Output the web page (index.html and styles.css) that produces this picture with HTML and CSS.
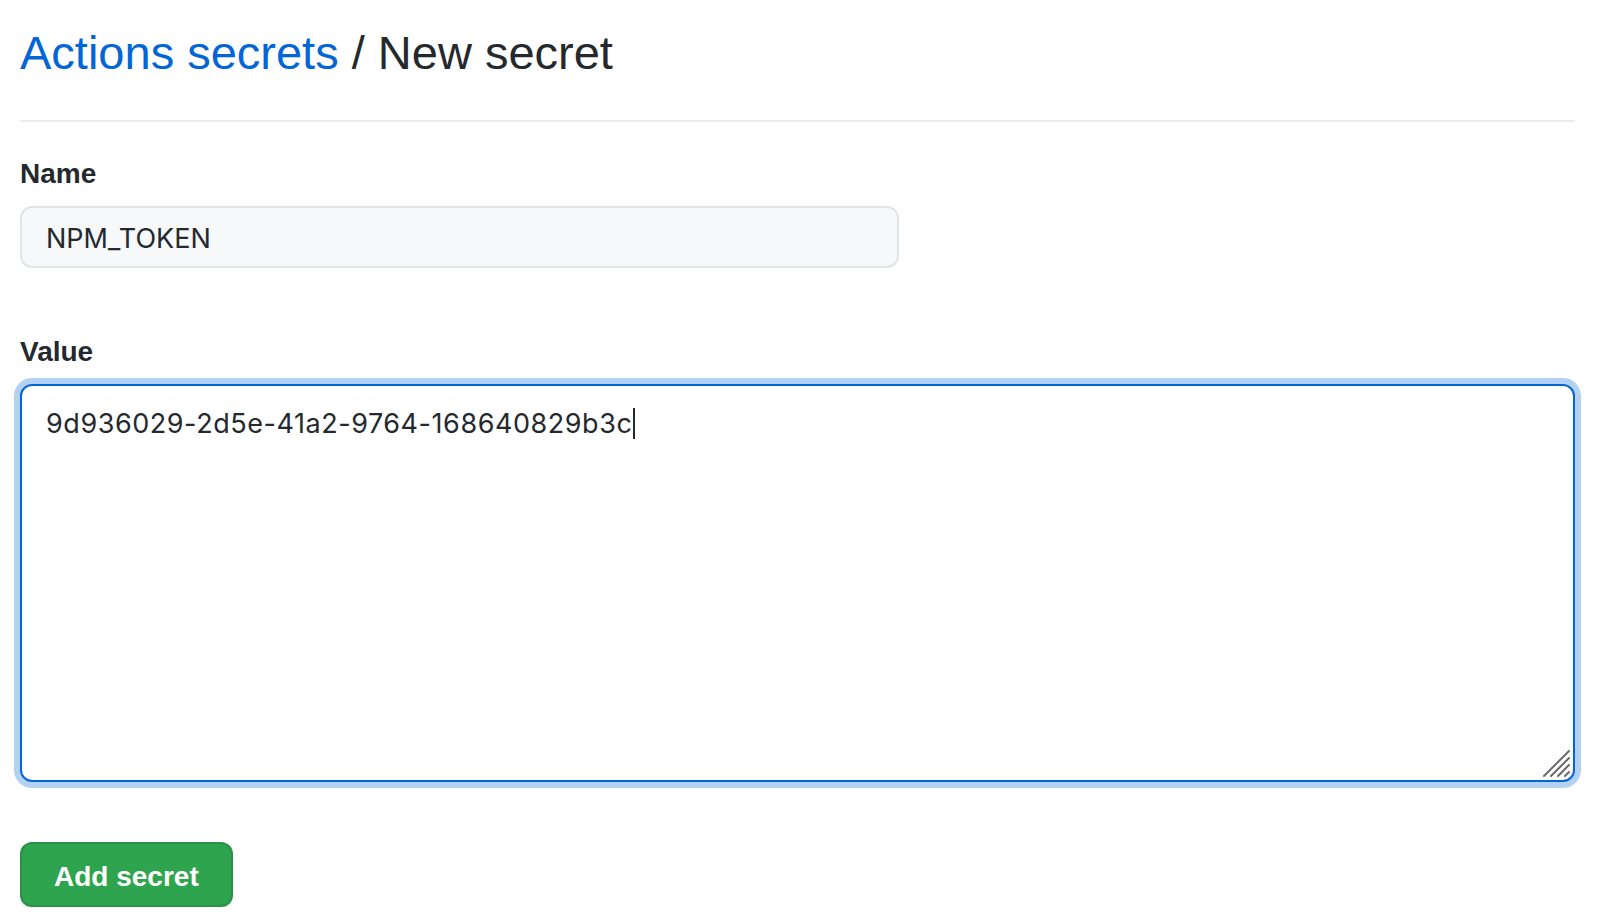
FILE: index.html
```html
<!DOCTYPE html>
<html lang="en">
<head>
<meta charset="utf-8">
<title>New secret</title>
<link rel="stylesheet" href="styles.css">
</head>
<body>
<main class="page">
  <header class="subhead">
    <h1 class="subhead-heading"><a class="crumb" href="#">Actions secrets</a> / New secret</h1>
  </header>
  <form class="secret-form">
    <div class="form-group">
      <label class="form-label" for="name">Name</label>
      <input class="form-control name-input" id="name" type="text" value="NPM_TOKEN" readonly>
    </div>
    <div class="form-group value-group">
      <label class="form-label">Value</label>
      <div class="textarea-wrap">
        <div class="form-control textarea focused">9d936029-2d5e-41a2-9764-168640829b3c<span class="caret"></span></div>
        <svg class="grip" width="30" height="30" viewBox="0 0 30 30" aria-hidden="true">
          <path d="M2 27 L27 2 M9 27 L27 9 M16 27 L27 16 M23 27 L27 23" stroke="#6a6a6a" stroke-width="2" stroke-linecap="round"/>
        </svg>
      </div>
    </div>
    <div class="actions">
      <button class="btn-primary" type="button">Add secret</button>
    </div>
  </form>
</main>
</body>
</html>
```
FILE: styles.css
```css
html, body {
  margin: 0;
  padding: 0;
  background: #ffffff;
}
body {
  font-family: "Liberation Sans", Arial, sans-serif;
  color: #24292e;
}
.page {
  padding: 0 31px 0 20px;
}
.subhead {
  padding-top: 23px;
  padding-bottom: 38px;
  border-bottom: 2px solid #eaecef;
}
.subhead-heading {
  margin: 0;
  font-size: 47px;
  font-weight: 400;
  line-height: 59px;
  color: #24292e;
}
.crumb {
  color: #0366d6;
  text-decoration: none;
}
.secret-form {
  display: flex;
  flex-direction: column;
  padding-top: 32px;
}
.form-group {
  display: flex;
  flex-direction: column;
  align-items: flex-start;
}
.value-group {
  margin-top: 64px;
}
.form-label {
  font-size: 28px;
  font-weight: 700;
  line-height: 40px;
  margin-bottom: 12px;
  color: #24292e;
}
.form-control {
  box-sizing: border-box;
  font-family: Inter, "Liberation Sans", sans-serif;
  font-size: 27px;
  line-height: 40px;
  color: #24292e;
  border: 2px solid #e1e4e8;
  border-radius: 12px;
  padding: 10px 24px 8px;
  outline: none;
}
.name-input {
  width: 879px;
  height: 62px;
  background: #f6f8fa;
  margin: 0;
}
.textarea-wrap {
  position: relative;
  width: 100%;
}
.textarea {
  width: 100%;
  height: 398px;
  background: #ffffff;
  padding-top: 18px;
  letter-spacing: 0.55px;
}
.textarea.focused {
  border-color: #0366d6;
  box-shadow: 0 0 0 6px rgba(3, 102, 214, 0.3);
}
.caret {
  display: inline-block;
  width: 0;
  height: 31px;
  border-left: 2px solid #24292e;
  vertical-align: -6px;
  margin-left: 1px;
}
.grip {
  position: absolute;
  right: 3px;
  bottom: 3px;
}
.actions {
  margin-top: 60px;
}
.btn-primary {
  box-sizing: border-box;
  height: 65px;
  padding: 4px 32px 0;
  font-family: "Liberation Sans", Arial, sans-serif;
  font-size: 28px;
  font-weight: 700;
  line-height: 40px;
  color: #ffffff;
  background: #2ea44f;
  border: 2px solid rgba(27, 31, 35, 0.15);
  border-radius: 12px;
  box-shadow: 0 2px 0 rgba(27, 31, 35, 0.1);
  cursor: pointer;
}
```
